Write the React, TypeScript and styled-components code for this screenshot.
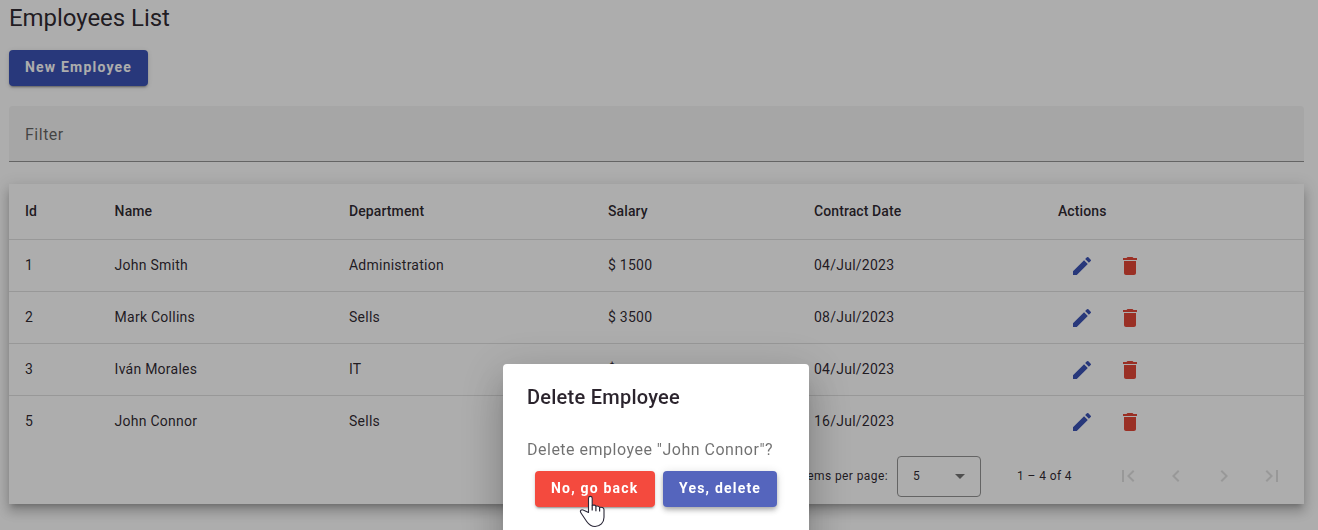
import React from 'react';
import styled, { createGlobalStyle } from 'styled-components';

const GlobalStyle = createGlobalStyle`
  *, *::before, *::after { box-sizing: border-box; }
  html, body { margin: 0; height: 100%; overflow: hidden; }
  body {
    background: #fff;
    color: rgba(12, 4, 14, 0.87);
    font-family: Roboto, "Liberation Sans", sans-serif;
  }
`;

const Page = styled.main`
  height: 530px;
  padding: 2px 14px 0 9px;
`;

const Heading = styled.h1`
  margin: 0 0 16px;
  font-size: 24px;
  font-weight: 400;
  line-height: 32px;
  letter-spacing: -0.05px;
`;

const Button = styled.button<{ $color: string; $width: number; $raised?: boolean }>`
  width: ${(p) => p.$width}px;
  height: 36px;
  padding: 0 0 2px 16px;
  border: 0;
  border-radius: 4px;
  background: ${(p) => p.$color};
  color: #fff;
  font: 700 14px/34px Roboto, "Liberation Sans", sans-serif;
  letter-spacing: 1.2px;
  text-align: left;
  white-space: nowrap;
  display: block;
  cursor: pointer;
  box-shadow: ${(p) =>
    p.$raised
      ? '0 2px 4px -1px rgba(0, 0, 0, 0.2), 0 4px 5px rgba(0, 0, 0, 0.14), 0 1px 10px rgba(0, 0, 0, 0.12)'
      : '0 3px 1px -2px rgba(0, 0, 0, 0.2), 0 2px 2px rgba(0, 0, 0, 0.14), 0 1px 5px rgba(0, 0, 0, 0.12)'};
`;

const FilterField = styled.div`
  height: 56px;
  margin-top: 20px;
  padding: 2px 16px 0;
  display: flex;
  align-items: center;
  border-radius: 4px 4px 0 0;
  border-bottom: 1px solid #949494;
  background: #f5f5f5;
  color: rgba(0, 0, 0, 0.6);
  font-size: 16px;
  letter-spacing: 0.5px;
`;

const Card = styled.section`
  margin-top: 22px;
  background: #fff;
  box-shadow: 0 5px 5px -3px rgba(0, 0, 0, 0.2), 0 8px 10px 1px rgba(0, 0, 0, 0.14), 0 3px 14px 2px rgba(0, 0, 0, 0.12);
`;

const Row = styled.div<{ $head?: boolean; $last?: boolean }>`
  display: grid;
  grid-template-columns: 89.6px 234.4px 259px 206px 244px 1fr;
  align-items: center;
  height: ${(p) => (p.$head ? 56 : 52)}px;
  padding-bottom: 2px;
  border-bottom: 1px solid ${(p) => (p.$last ? 'transparent' : 'rgba(0, 0, 0, 0.12)')};
  font-size: 14px;
  font-weight: ${(p) => (p.$head ? 500 : 400)};
  letter-spacing: ${(p) => (p.$head ? 0.1 : 0.25)}px;
`;

const Cell = styled.div`
  padding: 0 16px;
  white-space: nowrap;
`;

const Actions = styled(Cell)`
  display: flex;
  padding-top: 2px;
`;

const IconButton = styled.button<{ $color: string }>`
  width: 48px;
  height: 48px;
  padding: 12px;
  border: 0;
  background: transparent;
  color: ${(p) => p.$color};

  svg {
    display: block;
    width: 24px;
    height: 24px;
    fill: currentColor;
  }
`;

const Paginator = styled.footer`
  display: flex;
  align-items: center;
  justify-content: flex-end;
  height: 56px;
  padding-right: 8px;
  font-size: 12px;
  letter-spacing: 0.4px;
`;

const PageSize = styled.div`
  display: flex;
  align-items: center;
  justify-content: space-between;
  width: 84px;
  height: 41px;
  margin: 0 36px 0 9px;
  padding: 0 15px;
  border: 1px solid #949494;
  border-radius: 4px;
`;

const Arrow = styled.span`
  border: 5px solid transparent;
  border-top-color: rgba(0, 0, 0, 0.54);
  border-bottom: 0;
`;

const Range = styled.span`
  margin-right: 32px;
`;

const Backdrop = styled.div`
  position: fixed;
  inset: 0;
  display: flex;
  align-items: flex-start;
  justify-content: center;
  padding: 364px 6px 0 0;
  background: rgba(0, 0, 0, 0.32);
`;

const Dialog = styled.div`
  width: 306px;
  height: 186px;
  border-radius: 4px;
  background: #fff;
  box-shadow: 0 11px 15px -7px rgba(0, 0, 0, 0.2), 0 24px 38px 3px rgba(0, 0, 0, 0.14), 0 9px 46px 8px rgba(0, 0, 0, 0.12);
`;

const DialogTitle = styled.h2`
  margin: 0;
  padding: 17px 24px 0;
  font-size: 20px;
  font-weight: 500;
  line-height: 32px;
  letter-spacing: 0.25px;
`;

const DialogText = styled.p`
  margin: 0;
  padding: 25px 24px 0;
  color: rgba(0, 0, 0, 0.56);
  font-size: 16px;
  line-height: 24px;
  letter-spacing: 0.5px;
  white-space: nowrap;
`;

const DialogActions = styled.div`
  display: flex;
  gap: 8px;
  padding: 9px 32px 0;
`;

const Pointer = styled.svg`
  position: fixed;
  left: 579px;
  top: 494px;
  width: 28px;
  height: 34px;
`;

const employees = [
  { id: 1, name: 'John Smith', department: 'Administration', salary: '1500', date: '04/Jul/2023' },
  { id: 2, name: 'Mark Collins', department: 'Sells', salary: '3500', date: '08/Jul/2023' },
  { id: 3, name: 'Iván Morales', department: 'IT', salary: '', date: '04/Jul/2023' },
  { id: 5, name: 'John Connor', department: 'Sells', salary: '', date: '16/Jul/2023' },
];

const columns = ['Id', 'Name', 'Department', 'Salary', 'Contract Date', 'Actions'];

const editPath = 'M3 17.25V21h3.75L17.81 9.94l-3.75-3.75L3 17.25zM20.71 7.04a1 1 0 0 0 0-1.41l-2.34-2.34a1 1 0 0 0-1.41 0l-1.83 1.83 3.75 3.75 1.83-1.83z';
const deletePath = 'M6 19c0 1.1.9 2 2 2h8c1.1 0 2-.9 2-2V7H6v12zM19 4h-3.5l-1-1h-5l-1 1H5v2h14V4z';

const pagerIcons = [
  { label: 'First page', d: 'M18.41 16.59L13.82 12l4.59-4.59L17 6l-6 6 6 6zM6 6h2v12H6z' },
  { label: 'Previous page', d: 'M15.41 7.41L14 6l-6 6 6 6 1.41-1.41L10.83 12z' },
  { label: 'Next page', d: 'M10 6L8.59 7.41 13.17 12l-4.58 4.59L10 18l6-6z' },
  { label: 'Last page', d: 'M5.59 7.41L10.18 12l-4.59 4.59L7 18l6-6-6-6zM16 6h2v12h-2z' },
];

function ActionIcon({ label, color, d }: { label: string; color: string; d: string }) {
  return (
    <IconButton $color={color} aria-label={label}>
      <svg viewBox="0 0 24 24"><path d={d} /></svg>
    </IconButton>
  );
}

export default function App() {
  return (
    <>
      <GlobalStyle />
      <Page>
        <Heading>Employees List</Heading>
        <Button $color="#3b53b5" $width={139}>New Employee</Button>
        <FilterField>Filter</FilterField>
        <Card>
          <Row $head>
            {columns.map((c) => <Cell key={c}>{c}</Cell>)}
          </Row>
          {employees.map((e, i) => (
            <Row key={e.id} $last={i === employees.length - 1}>
              <Cell>{e.id}</Cell>
              <Cell>{e.name}</Cell>
              <Cell>{e.department}</Cell>
              <Cell>$ {e.salary}</Cell>
              <Cell>{e.date}</Cell>
              <Actions>
                <ActionIcon label="Edit" color="#3b53b5" d={editPath} />
                <ActionIcon label="Delete" color="#e44737" d={deletePath} />
              </Actions>
            </Row>
          ))}
          <Paginator>
            <span>Items per page:</span>
            <PageSize><span>5</span><Arrow /></PageSize>
            <Range>1 – 4 of 4</Range>
            {pagerIcons.map((p) => (
              <ActionIcon key={p.label} label={p.label} color="rgba(0, 0, 0, 0.12)" d={p.d} />
            ))}
          </Paginator>
        </Card>
      </Page>
      <Backdrop>
        <Dialog role="dialog">
          <DialogTitle>Delete Employee</DialogTitle>
          <DialogText>Delete employee "John Connor"?</DialogText>
          <DialogActions>
            <Button $color="#f44a3e" $width={120}>No, go back</Button>
            <Button $color="#5565bd" $width={114} $raised>Yes, delete</Button>
          </DialogActions>
        </Dialog>
      </Backdrop>
      <Pointer viewBox="0 0 28 34">
        <path
          d="M9.500 18.500V4.200c0-2.400 3.700-2.400 3.700 0V11.500c1.300-.8 3.300-.4 3.700.8 1.500-.6 3.300 0 3.700 1.200 1.800-.7 4.400 .2 4.400 2.300v7.500c0 5.500-3.900 9.200-8.900 9.200-4 0-6.400-2.100-8.400-5l-5.700-8.500c-1.600-2.500.5-4 2.700-2.700z"
          fill="#fff"
          stroke="#2b2838"
          strokeWidth="1.100"
          strokeLinejoin="round"
        />
        <path d="M13.200 11.500v5M16.900 12.300v5M20.600 13.500V17.500" fill="none" stroke="#2b2838" strokeWidth="1.200" />
      </Pointer>
    </>
  );
}
